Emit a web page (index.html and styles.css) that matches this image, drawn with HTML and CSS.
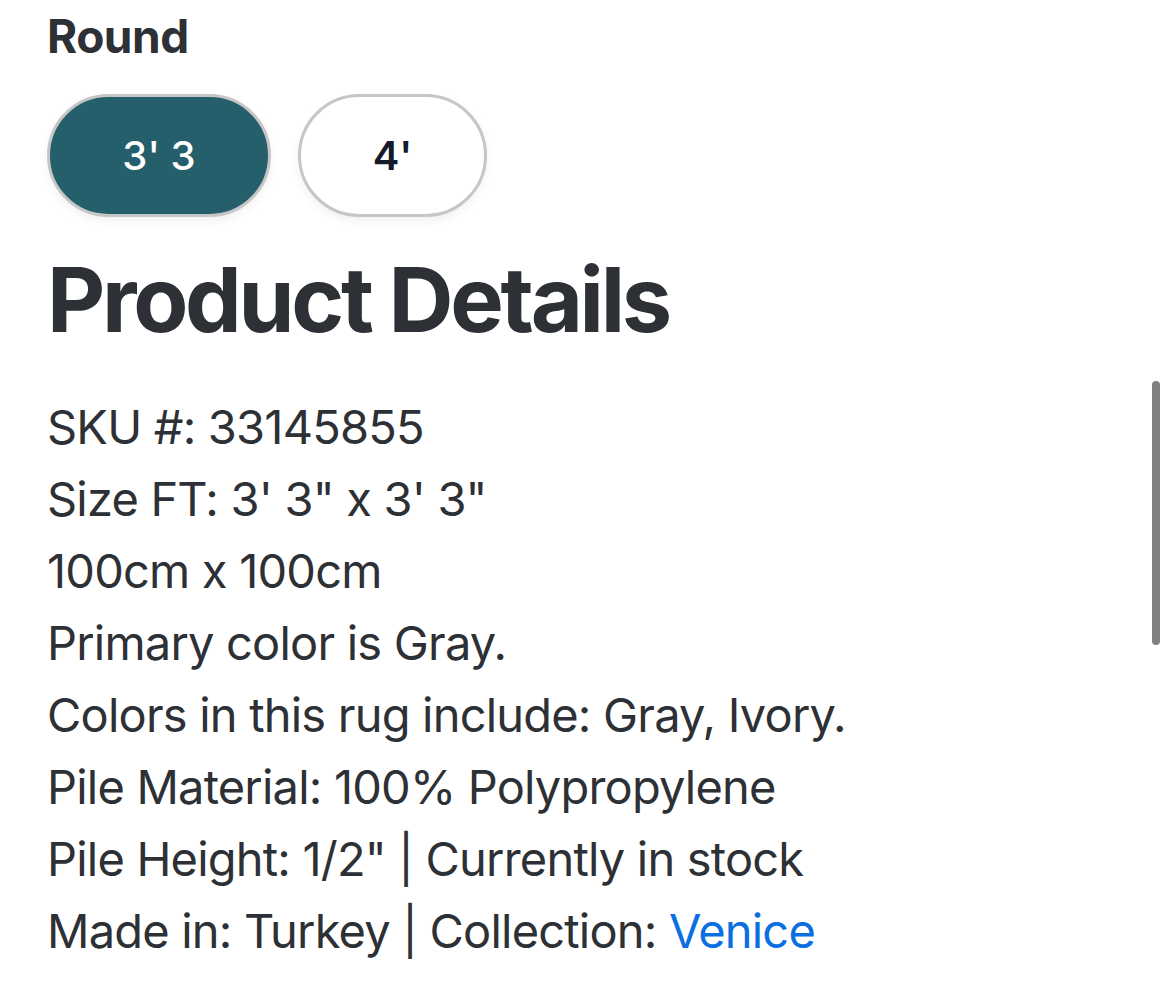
FILE: index.html
```html
<!DOCTYPE html>
<html lang="en">
<head>
<meta charset="utf-8">
<link rel="stylesheet" href="styles.css">
</head>
<body>
<main class="page">
  <section class="size-group">
    <div class="group-label">Round</div>
    <div class="pills">
      <button class="pill pill-active">3' 3</button>
      <button class="pill pill-small">4'</button>
    </div>
  </section>
  <section class="details">
    <h1 class="details-title">Product Details</h1>
    <ul class="details-list">
      <li>SKU #: 33145855</li>
      <li>Size FT: 3' 3" x 3' 3"</li>
      <li>100cm x 100cm</li>
      <li>Primary color is Gray.</li>
      <li>Colors in this rug include: Gray, Ivory.</li>
      <li>Pile Material: 100% Polypropylene</li>
      <li>Pile Height: 1/2" | Currently in stock</li>
      <li>Made in: Turkey | Collection: <a class="link" href="#">Venice</a></li>
    </ul>
  </section>
</main>
<div class="scrollbar"></div>
</body>
</html>
```

FILE: styles.css
```css
html, body {
  margin: 0;
  padding: 0;
  background: #ffffff;
}
body {
  font-family: Inter, "Liberation Sans", sans-serif;
  color: #2d3035;
  width: 1170px;
  height: 995px;
  overflow: hidden;
}
.page {
  padding: 0 47px;
}
.group-label {
  font-size: 46px;
  font-weight: 700;
  line-height: 72px;
  letter-spacing: -0.5px;
  color: #2d3035;
}
.pills {
  display: flex;
  gap: 27px;
  margin-top: 22px;
}
.pill {
  font-family: Inter, "Liberation Sans", sans-serif;
  height: 123px;
  border-radius: 62px;
  border: 3px solid #c6c6c6;
  background: #ffffff;
  color: #151b2b;
  font-size: 40px;
  font-weight: 600;
  padding: 0;
  box-shadow: 0 4px 10px rgba(0, 0, 0, 0.06);
  display: flex;
  align-items: center;
  justify-content: center;
}
.pill-active {
  width: 224px;
  background: #255f6b;
  color: #ffffff;
  font-weight: 500;
}
.pill-small {
  width: 189px;
}
.details-title {
  margin: 28px 0 0;
  font-size: 90px;
  font-weight: 700;
  line-height: 110px;
  letter-spacing: -3.3px;
  color: #2d3035;
}
.details-list {
  list-style: none;
  margin: 36px 0 0;
  padding: 0;
  font-size: 47px;
  line-height: 72px;
  letter-spacing: -0.8px;
}
.link {
  color: #0a6fe0;
  text-decoration: none;
}
.scrollbar {
  position: fixed;
  left: 1152px;
  top: 381px;
  width: 8px;
  height: 264px;
  border-radius: 4px;
  background: #808080;
}
```
